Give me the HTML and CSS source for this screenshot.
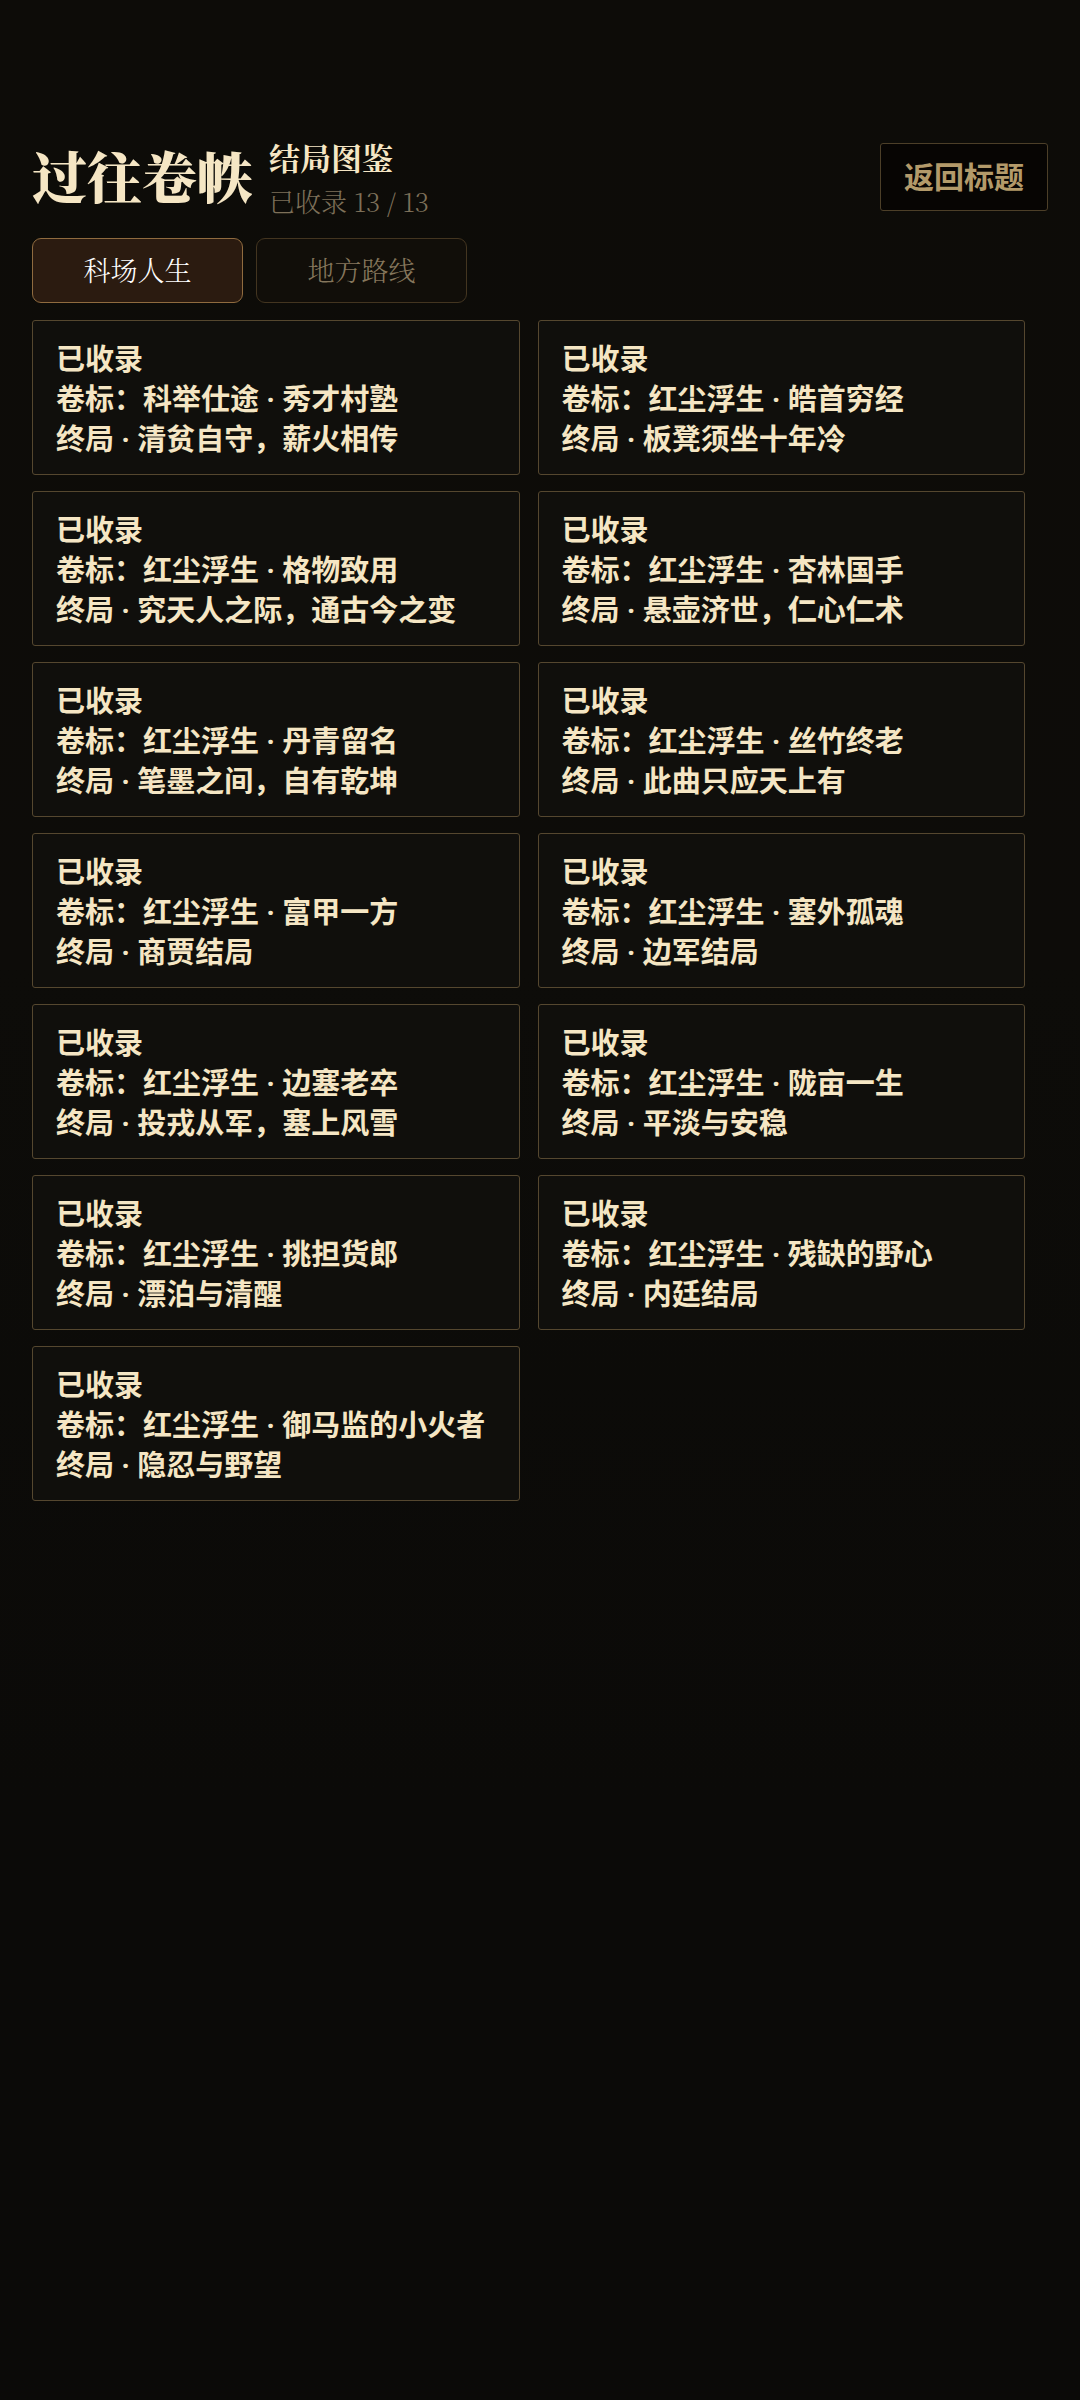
FILE: index.html
```html
<!DOCTYPE html>
<html lang="zh-CN">
<head>
    <meta charset="UTF-8">
    <meta name="viewport" content="width=device-width, initial-scale=1.0">
    <title>过往卷帙</title>
    <link rel="stylesheet" href="styles.css">
</head>
<body>
    <!-- Header -->
    <header class="header">
        <h1 class="title">过往卷帙</h1>
        <div class="summary">
            <h2 class="subtitle">结局图鉴</h2>
            <p class="count">已收录 13 / 13</p>
        </div>
        <button type="button" class="back-btn">返回标题</button>
    </header>

    <!-- Route Tabs -->
    <nav class="tabs">
        <button type="button" class="tab active">科场人生</button>
        <button type="button" class="tab">地方路线</button>
    </nav>

    <!-- Ending Cards -->
    <main class="card-grid">
        <button type="button" class="card">已收录<br>卷标：科举仕途 · 秀才村塾<br>终局 · 清贫自守，薪火相传</button>
        <button type="button" class="card">已收录<br>卷标：红尘浮生 · 皓首穷经<br>终局 · 板凳须坐十年冷</button>
        <button type="button" class="card">已收录<br>卷标：红尘浮生 · 格物致用<br>终局 · 究天人之际，通古今之变</button>
        <button type="button" class="card">已收录<br>卷标：红尘浮生 · 杏林国手<br>终局 · 悬壶济世，仁心仁术</button>
        <button type="button" class="card">已收录<br>卷标：红尘浮生 · 丹青留名<br>终局 · 笔墨之间，自有乾坤</button>
        <button type="button" class="card">已收录<br>卷标：红尘浮生 · 丝竹终老<br>终局 · 此曲只应天上有</button>
        <button type="button" class="card">已收录<br>卷标：红尘浮生 · 富甲一方<br>终局 · 商贾结局</button>
        <button type="button" class="card">已收录<br>卷标：红尘浮生 · 塞外孤魂<br>终局 · 边军结局</button>
        <button type="button" class="card">已收录<br>卷标：红尘浮生 · 边塞老卒<br>终局 · 投戎从军，塞上风雪</button>
        <button type="button" class="card">已收录<br>卷标：红尘浮生 · 陇亩一生<br>终局 · 平淡与安稳</button>
        <button type="button" class="card">已收录<br>卷标：红尘浮生 · 挑担货郎<br>终局 · 漂泊与清醒</button>
        <button type="button" class="card">已收录<br>卷标：红尘浮生 · 残缺的野心<br>终局 · 内廷结局</button>
        <button type="button" class="card">已收录<br>卷标：红尘浮生 · 御马监的小火者<br>终局 · 隐忍与野望</button>
    </main>
</body>
</html>
```

FILE: styles.css
```css
* {
    box-sizing: border-box;
}

body {
    margin: 0;
    padding: 135px 32px 32px;
    min-height: 100vh;
    background: linear-gradient(#0d0c08, #0d0c09 40%, #0b0a08 75%, #0b0a08);
    color: #f5e6c4;
    font-family: Roboto, "Noto Sans CJK SC", sans-serif;
}

/* Header */
.header {
    display: flex;
    align-items: center;
    height: 84px;
}

.title {
    margin: 0;
    padding-bottom: 4px;
    font-family: "LXGW WenKai", "KaiTi", "Noto Serif CJK SC", "Noto Sans CJK SC", serif;
    font-size: 55px;
    line-height: 80px;
    font-weight: 900;
}

.summary {
    margin-left: 17px;
    padding-top: 4px;
    font-family: "Noto Serif CJK SC", "Noto Sans CJK SC", serif;
}

.subtitle {
    margin: 0;
    font-size: 31px;
    line-height: 44px;
    font-weight: 700;
}

.count {
    margin: 0;
    color: #7d7059;
    font-size: 26px;
    line-height: 44px;
    font-weight: 300;
}

.back-btn {
    margin-left: auto;
    padding: 0 23px 4px;
    height: 68px;
    border: 1px solid #4c3f28;
    border-radius: 3px;
    background: #070503;
    color: #b39a6a;
    font-family: inherit;
    font-size: 30px;
    font-weight: 700;
    cursor: pointer;
}

/* Route Tabs */
.tabs {
    display: flex;
    gap: 13px;
    margin-top: 19px;
}

.tab {
    width: 211px;
    height: 65px;
    padding: 0 0 2px;
    border: 1px solid #433520;
    border-radius: 9px;
    background: #110e09;
    color: #85765c;
    font-family: "Noto Serif CJK SC", "Noto Sans CJK SC", serif;
    font-size: 27px;
    font-weight: 300;
    cursor: pointer;
}

.tab.active {
    border-color: #8f6b3f;
    background: #2b1b10;
    color: #ffffff;
}

/* Ending Cards */
.card-grid {
    display: grid;
    grid-template-columns: 1fr 1fr;
    gap: 16px 18px;
    margin-top: 17px;
    margin-right: 23px;
}

.card {
    padding: 19px 23px 14px;
    border: 1px solid #55472f;
    border-radius: 3px;
    background: #100f0c;
    color: #f5e6c4;
    font-family: inherit;
    font-size: 29px;
    line-height: 40px;
    font-weight: 700;
    text-align: left;
    cursor: pointer;
}
```
